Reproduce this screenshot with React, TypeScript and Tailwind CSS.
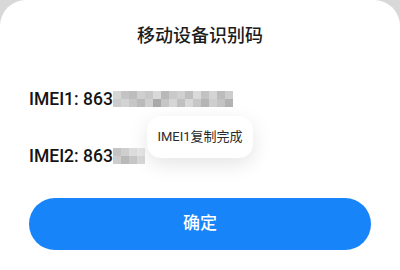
const font = { fontFamily: '"Roboto", "Noto Sans CJK SC", sans-serif' };

const row1Top = ["#d6d6d6", "#c4c4c4", "#bdbdbd", "#cfcfcf", "#c8c8c8", "#d9d9d9", "#b8b8b8", "#c9c9c9", "#d0d0d0", "#bfbfbf", "#dadada", "#c2c2c2", "#d4d4d4", "#bcbcbc", "#cdcdcd"];
const row1Bot = ["#cbcbcb", "#d3d3d3", "#c6c6c6", "#bababa", "#cfcfcf", "#a9a9a9", "#c5c5c5", "#d6d6d6", "#c0c0c0", "#d8d8d8", "#c7c7c7", "#b5b5b5", "#cecece", "#c3c3c3", "#b2b2b2"];
const row2Top = ["#c4c4c4", "#cfcfcf", "#dddddd", "#e6e6e6"];
const row2Bot = ["#cdcdcd", "#b9b9b9", "#c6c6c6", "#d8d8d8"];

function Pixels({ top, bot }: { top: string[]; bot: string[] }) {
  return (
    <div className="flex flex-col blur-[0.6px]">
      <div className="flex">
        {top.map((c, i) => (
          <div key={i} className="h-[8px] w-[8px]" style={{ backgroundColor: c }} />
        ))}
      </div>
      <div className="flex">
        {bot.map((c, i) => (
          <div key={i} className="h-[8px] w-[8px]" style={{ backgroundColor: c }} />
        ))}
      </div>
    </div>
  );
}

export default function App() {
  return (
    <div className="relative h-[270px] w-[400px] overflow-hidden bg-[#d8d8d8]" style={font}>
      <div className="flex h-full flex-col rounded-t-[26px] bg-white px-[29px]">
        <h1 className="pt-[24px] text-center text-[18px] leading-[24px] font-medium text-[#1c1c1c]">
          移动设备识别码
        </h1>
        <div className="mt-[39px] flex items-center">
          <span className="text-[17.5px] leading-[24px] font-medium text-[#141414]">IMEI1: 863</span>
          <Pixels top={row1Top} bot={row1Bot} />
        </div>
        <div className="mt-[33px] flex items-center">
          <span className="text-[17.5px] leading-[24px] font-medium text-[#141414]">IMEI2: 863</span>
          <Pixels top={row2Top} bot={row2Bot} />
        </div>
        <button className="mt-[30px] flex h-[52px] w-full items-center justify-center rounded-full bg-[#1784fa] text-[17px] font-medium text-white">
          确定
        </button>
      </div>
      <div className="absolute top-[116px] left-[147px] flex h-[42px] w-[106px] items-center justify-center rounded-[14px] bg-white text-[13px] text-[#2a2a2a] shadow-[0_6px_20px_rgba(0,0,0,0.11)]">
        IMEI1复制完成
      </div>
    </div>
  );
}
